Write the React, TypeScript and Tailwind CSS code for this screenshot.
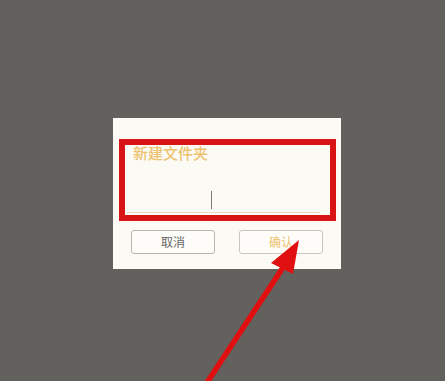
export default function App() {
  return (
    <div
      className="relative h-[381px] w-[445px] overflow-hidden bg-[#63615d] pt-[118px] pl-[113px]"
      style={{ fontFamily: '"Noto Sans CJK SC", "Noto Sans", sans-serif' }}
    >
      <div className="flex h-[151px] w-[228px] flex-col bg-[#fcfaf5] px-[6px] pt-[21px]">
        {/* highlighted input area */}
        <div className="flex h-[82px] w-[217px] flex-col border-[6px] border-[#d91414] px-[2px]">
          <span className="pl-[6px] text-[15px] leading-[16px] font-medium text-[#ecc36f]">新建文件夹</span>
          <div className="relative mt-auto mb-[2px] mr-[8px] h-[26px] border-b border-[#e6dcc6]">
            <div className="absolute left-[84px] top-[4px] h-[18px] w-px bg-[#777]" />
          </div>
        </div>
        <div className="mt-[9px] flex gap-[24px] pl-[12px]">
          <button className="h-[24px] w-[84px] rounded-[3px] border border-[#b9b6b0] bg-[#fdfcf9] text-[12px] text-[#666]">
            取消
          </button>
          <button className="h-[24px] w-[84px] rounded-[3px] border border-[#c9c6c0] bg-[#fdfcf9] text-[12px] text-[#ecc36f]">
            确认
          </button>
        </div>
      </div>

      {/* red arrow annotation */}
      <svg className="absolute left-0 top-0" width="445" height="381" viewBox="0 0 445 381">
        <line x1="206" y1="384" x2="284" y2="266" stroke="#e01010" strokeWidth="5.5" />
        <polygon points="299,240 271,263 293,274" fill="#e01010" />
      </svg>
    </div>
  );
}
